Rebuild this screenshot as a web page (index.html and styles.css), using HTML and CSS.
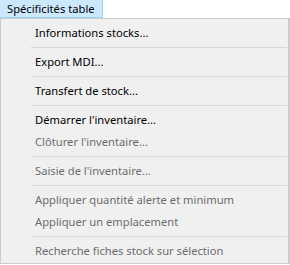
FILE: index.html
```html
<!DOCTYPE html>
<html lang="fr">
<head>
    <meta charset="UTF-8">
    <title>Spécificités table</title>
    <link rel="stylesheet" href="styles.css">
</head>
<body>

    <!-- Menu bar -->
    <div class="menubar">
        <span class="menubar-item active">Spécificités table</span>
    </div>

    <!-- Dropdown -->
    <div class="menu">
        <div class="menu-item">Informations stocks...</div>
        <div class="separator"></div>
        <div class="menu-item">Export MDI...</div>
        <div class="separator"></div>
        <div class="menu-item">Transfert de stock...</div>
        <div class="separator"></div>
        <div class="menu-item">Démarrer l'inventaire...</div>
        <div class="menu-item disabled">Clôturer l'inventaire...</div>
        <div class="separator"></div>
        <div class="menu-item disabled">Saisie de l'inventaire...</div>
        <div class="separator"></div>
        <div class="menu-item disabled">Appliquer quantité alerte et minimum</div>
        <div class="menu-item disabled">Appliquer un emplacement</div>
        <div class="separator"></div>
        <div class="menu-item disabled">Recherche fiches stock sur sélection</div>
    </div>

</body>
</html>
```

FILE: styles.css
```css
body {
    margin: 0;
    background-color: white;
    font-family: "Noto Sans", "Open Sans", sans-serif;
    font-size: 11.2px;
    color: #000;
}
.menubar {
    display: flex;
    height: 18px;
}
.menubar-item {
    display: flex;
    align-items: center;
    padding: 0 7px;
    white-space: nowrap;
    line-height: 17px;
}
.menubar-item.active {
    background-color: #cce8ff;
    border-right: 1px solid #99d1ff;
    border-bottom: 1px solid #99d1ff;
}
.menu {
    width: 287px;
    background-color: #f0f0f0;
    border: 1px solid #cccccc;
    border-right-width: 2px;
    padding: 3px 0 1px 0;
}
.menu-item {
    height: 22px;
    line-height: 22px;
    padding-left: 34px;
    white-space: nowrap;
}
.menu-item.disabled {
    color: #6d6d6d;
}
.separator {
    height: 1px;
    margin: 3px 1px 3px 30px;
    background-color: #d7d7d7;
}
```
